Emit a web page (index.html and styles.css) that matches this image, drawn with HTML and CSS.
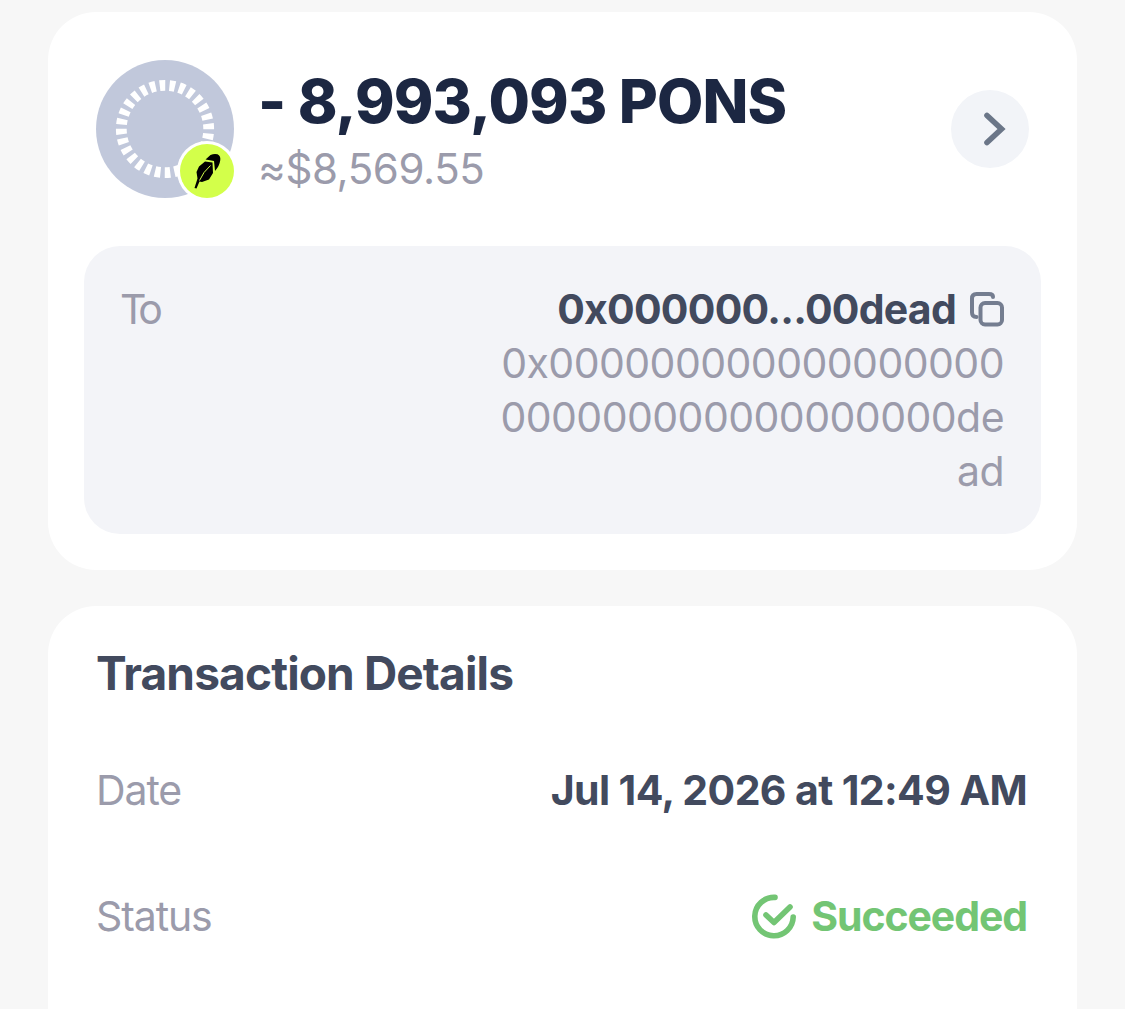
FILE: index.html
```html
<!DOCTYPE html>
<html lang="en">
<head>
<meta charset="utf-8">
<title>Transaction</title>
<link rel="stylesheet" href="styles.css">
</head>
<body>
<main class="page">
  <section class="card transfer">
    <header class="asset">
      <div class="token">
        <svg class="coin" viewBox="0 0 138 138"><circle cx="69" cy="69" r="69" fill="#c1c8db"/><circle cx="69" cy="69" r="43.7" fill="none" stroke="#fff" stroke-width="10.8" pathLength="168" stroke-dasharray="3.4 2.6" transform="rotate(-6.9 69 69)"/></svg>
        <svg class="chain" viewBox="0 0 60 60"><circle cx="30" cy="30" r="30" fill="#fff"/><circle cx="30" cy="30" r="27" fill="#d3ff4a"/><path d="M17.5 47L20.5 37.5L19.5 31L22 25.5L28 20.5L35.5 21.5L36 32L32 38.5L25 41L22.5 40.5L19.5 47.5ZM28.5 18.5L33.5 14Q37 12.5 40.5 13.3Q43.8 15 43.3 19Q42.5 25 38 30L37 20Z"/><path d="M22.5 39.5Q26 31 33.5 24.5" fill="none" stroke="#d3ff4a" stroke-width="1"/></svg>
      </div>
      <div class="amounts"><h1 class="amount"><span>- 8,993,093 PONS</span></h1><p class="fiat"><span>≈$8,569.55</span></p></div>
      <button class="next" aria-label="Open token"><svg viewBox="0 0 78 78"><path d="M36 25.5L50.5 39L36 52.5" fill="none" stroke="#6b7688" stroke-width="5.6" stroke-linecap="round"/></svg></button>
    </header>
    <div class="recipient">
      <span class="label to">To</span>
      <div class="address">
        <div class="short"><strong>0x000000...00dead</strong><svg class="copy" viewBox="0 0 36 36"><rect x="11.5" y="12" width="21.5" height="21.5" rx="4.5"/><path d="M7.5 26Q3 26 3 21.5V7.5Q3 3 7.5 3H20Q24 3 24 6"/></svg></div>
        <p class="full"><span>0x000000000000000000</span><br><span>000000000000000000de</span><br><span>ad</span></p>
      </div>
    </div>
  </section>
  <section class="card details">
    <h2 class="title">Transaction Details</h2>
    <div class="row"><span class="label">Date</span><strong class="date">Jul 14, 2026 at 12:49 AM</strong></div>
    <div class="row"><span class="label">Status</span><div class="status"><svg viewBox="0 0 46 46"><path d="M24 4.4A19.2 19.2 0 1 0 42.2 24M15 22L23 29.5L39 14"/></svg><strong>Succeeded</strong></div></div>
  </section>
</main>
</body>
</html>
```
FILE: styles.css
```css
* { box-sizing: border-box; margin: 0; }
body { background: #f7f7f7; color: #424a5e; font-family: Inter, sans-serif; font-size: 41px; overflow: hidden; }
.page { height: 1009px; padding: 12px 48px 0; display: flex; flex-direction: column; gap: 36px; overflow: hidden; }
.card { background: #fff; border-radius: 48px; flex: none; }
.transfer { height: 558px; padding: 48px 36px 36px; }
.asset { height: 138px; padding: 0 12px; display: flex; align-items: center; }
.token { position: relative; width: 138px; height: 138px; }
.coin { display: block; width: 138px; height: 138px; }
.chain { position: absolute; width: 60px; height: 60px; left: 81px; top: 81px; }
.amounts { margin-left: 24px; padding-top: 9px; flex: 1; white-space: nowrap; }
.amount { font-size: 60px; line-height: 70px; font-weight: 800; color: #1c2742; letter-spacing: -.85px; }
.fiat { font-size: 42px; line-height: 66px; color: #9b9bab; letter-spacing: -.4px; }
.next { width: 78px; height: 78px; border: 0; padding: 0; border-radius: 50%; background: #f2f4f8; }
.next svg { width: 78px; height: 78px; display: block; }
.recipient { margin-top: 48px; height: 288px; border-radius: 36px; background: #f3f4f8; padding: 36px; display: flex; justify-content: space-between; }
.label { color: #9b9bab; line-height: 54px; letter-spacing: -1.1px; }
.to { letter-spacing: -5px; }
.address { text-align: right; line-height: 54px; }
.short { display: flex; align-items: center; justify-content: flex-end; gap: 13px; }
.copy { width: 36px; height: 36px; fill: none; stroke: #747d90; stroke-width: 4; stroke-linecap: round; }
.full { color: #9b9bab; letter-spacing: -.55px; padding-right: 1px; }
strong { font-weight: 650; white-space: nowrap; letter-spacing: -.6px; }
.short strong { letter-spacing: -.75px; }
.details { height: 480px; padding: 36px 48px; }
.title { font-size: 46px; line-height: 62px; font-weight: 650; letter-spacing: -.85px; }
.row { display: flex; align-items: center; justify-content: space-between; height: 54px; margin-top: 58.5px; padding-right: 2px; }
.row + .row { margin-top: 72px; }
.status { display: flex; align-items: center; gap: 14px; color: #73c574; }
.status strong { letter-spacing: -1.1px; }
.status svg { width: 46px; height: 46px; fill: none; stroke: currentColor; stroke-width: 5.6; stroke-linecap: round; stroke-linejoin: round; }
```
